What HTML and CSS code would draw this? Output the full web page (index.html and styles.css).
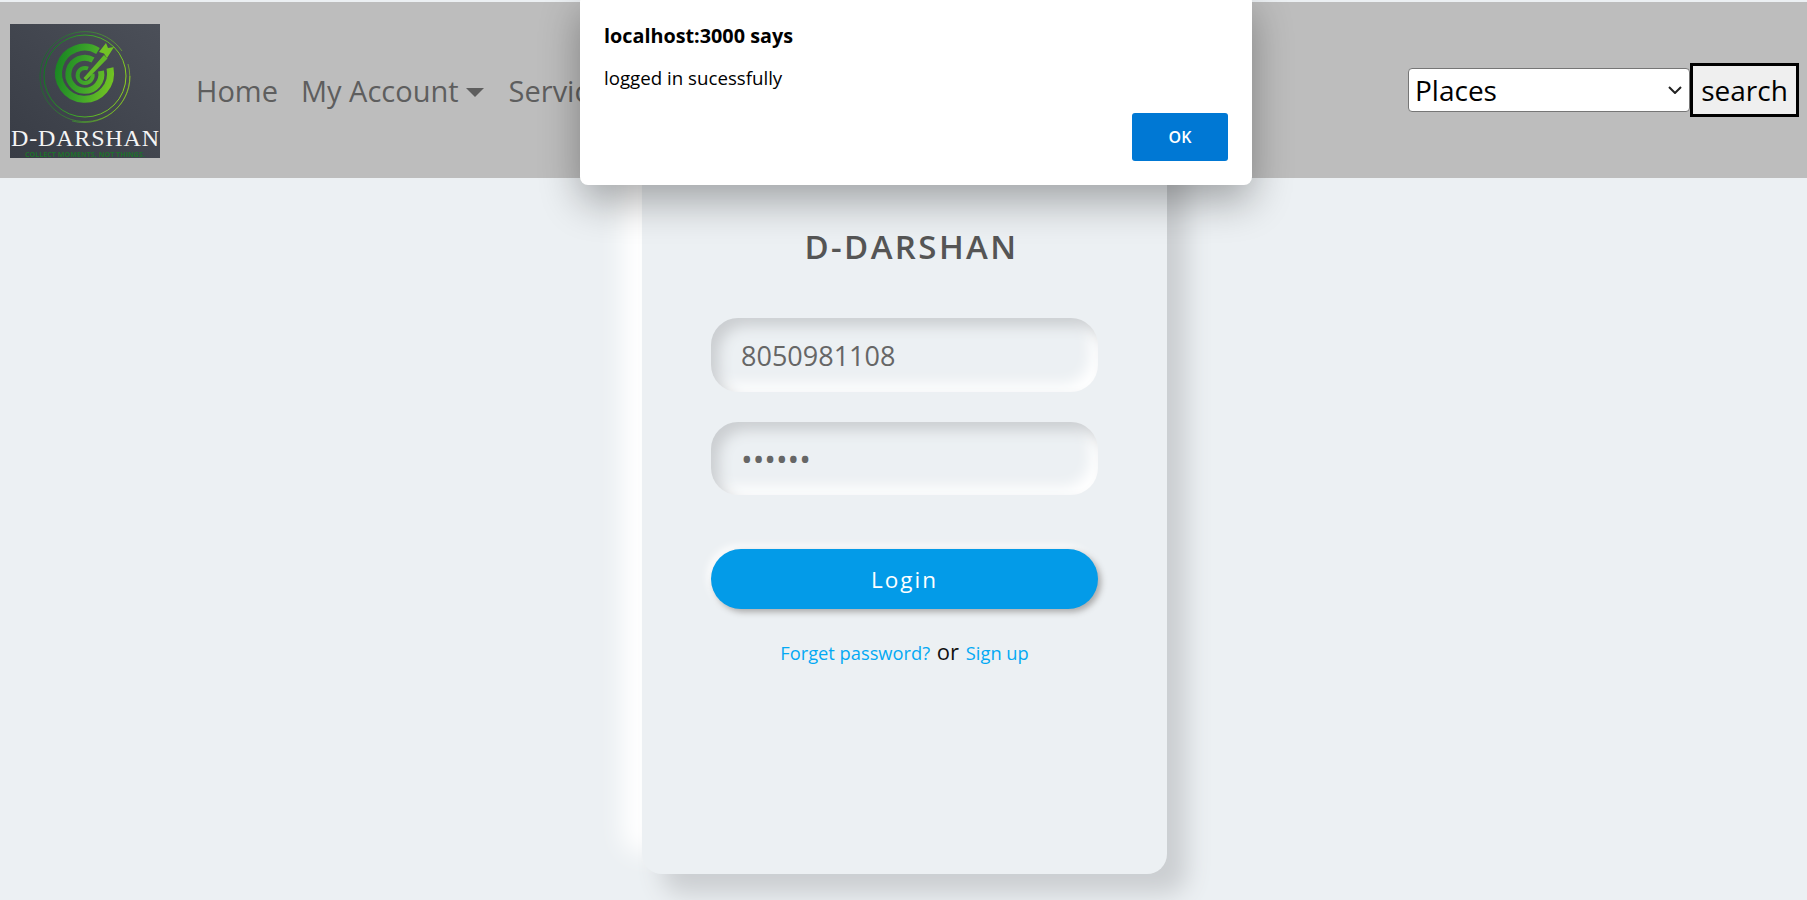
FILE: index.html
```html
<!DOCTYPE html>
<html lang="en">
<head>
<meta charset="utf-8">
<title>D-Darshan Login</title>
<link rel="stylesheet" href="styles.css">
</head>
<body>
<header class="navbar">
  <svg class="logo" viewBox="0 0 150 134" width="150" height="134" aria-label="D-Darshan logo">
    <defs>
      <linearGradient id="logoBg" x1="0" y1="1" x2="1" y2="0">
        <stop offset="0" stop-color="#383c45"/>
        <stop offset="1" stop-color="#4b4f58"/>
      </linearGradient>
      <linearGradient id="logoGreen" gradientUnits="userSpaceOnUse" x1="30" y1="40" x2="120" y2="60">
        <stop offset="0" stop-color="#07761f"/>
        <stop offset="0.5" stop-color="#3ea52a"/>
        <stop offset="1" stop-color="#93d51f"/>
      </linearGradient>
    </defs>
    <rect width="150" height="134" fill="url(#logoBg)"/>
    <g fill="none" stroke="url(#logoGreen)">
      <path d="M112 27A45 45 0 1 0 120 52" stroke-width="0.6"/>
      <path d="M118 40A46 46 0 0 1 62 97" stroke-width="0.6"/>
      <circle cx="75" cy="52" r="41" stroke-width="1"/>
      <path d="M88 27A26 26 0 1 0 100 44" stroke-width="7"/>
      <path d="M83 36A16.500 16.500 0 1 0 91 47" stroke-width="6"/>
      <path d="M78 44.500A7.500 7.500 0 1 0 82.500 50" stroke-width="4"/>
    </g>
    <path d="M73.500 54 L94 31 L97.500 34.500 L76 56.500Z" fill="#62b828"/>
    <path d="M89 28 L96 19 L98 24 L104 23 L97 34 L94 29.500Z" fill="#72c325"/>
    <text class="logo-name" x="1" y="122" textLength="148" lengthAdjust="spacing">D-DARSHAN</text>
    <text class="logo-tag" x="15" y="132.500" textLength="120" lengthAdjust="spacingAndGlyphs">COLLECT MOMENTS, NOT THINGS.</text>
  </svg>
  <nav class="menu">
    <a class="menu-link" href="#">Home</a>
    <a class="menu-link" href="#">My Account<span class="caret"></span></a>
    <a class="menu-link" href="#">Services</a>
  </nav>
  <form class="search">
    <select class="search-select"><option>Places</option></select>
    <button class="search-button" type="button">search</button>
  </form>
</header>

<main class="page">
  <section class="card">
    <h1 class="brand">D-DARSHAN</h1>
    <input class="field" type="text" value="8050981108">
    <input class="field field-pass" type="password" value="123456">
    <button class="login" type="button">Login</button>
    <p class="links"><a href="#">Forget password?</a> <span class="or">or</span> <a href="#">Sign up</a></p>
  </section>
</main>

<div class="dialog" role="alertdialog">
  <div class="dialog-title">localhost:3000 says</div>
  <div class="dialog-text">logged in sucessfully</div>
  <div class="dialog-actions"><button class="dialog-ok" type="button">OK</button></div>
</div>
</body>
</html>
```
FILE: styles.css
```css
* { box-sizing: border-box; }
html, body { height: 100%; }
body {
  margin: 0;
  padding-top: 2px;
  overflow: hidden;
  background: #ecf0f3;
  font-family: "Open Sans", "Noto Sans", sans-serif;
}
.navbar {
  position: relative;
  z-index: 2;
  display: flex;
  align-items: center;
  height: 176px;
  padding: 0 8px 0 10px;
  background: #bdbdbd;
}
.logo { flex: none; display: block; margin-top: 2px; }
.logo-name { font-family: "Liberation Serif", serif; font-size: 24px; fill: #f4f4f4; }
.logo-tag { font-family: "Open Sans", sans-serif; font-size: 7px; font-weight: 700; fill: #1f6f2c; }
.menu {
  display: flex;
  align-items: center;
  gap: 23px;
  margin-left: 36px;
  font-size: 29px;
}
.menu-link { color: #5e5e5e; text-decoration: none; white-space: nowrap; }
.caret {
  display: inline-block;
  margin: 0 2px 0 7px;
  vertical-align: 5px;
  border-top: 9px solid #5e5e5e;
  border-left: 9px solid transparent;
  border-right: 9px solid transparent;
}
.search { display: flex; align-items: center; margin-left: auto; }
.search-select {
  width: 282px;
  height: 44px;
  padding: 0 30px 0 6px;
  appearance: none;
  border: 1px solid #767676;
  border-radius: 4px;
  font: 28px "Open Sans", sans-serif;
  background: #fff url("data:image/svg+xml,%3Csvg xmlns='http://www.w3.org/2000/svg' width='14' height='8' viewBox='0 0 14 8'%3E%3Cpath d='M1 1l6 6 6-6' fill='none' stroke='%23222' stroke-width='2'/%3E%3C/svg%3E") no-repeat right 7px center;
  color: #000;
}
.search-button {
  width: 109px;
  height: 54px;
  padding: 0;
  border: 3px solid #000;
  background: #efefef;
  color: #000;
  font: 28px "Open Sans", sans-serif;
}
.page { display: flex; justify-content: center; padding-left: 2px; }
.card {
  display: flex;
  flex-direction: column;
  width: 525px;
  height: 776px;
  margin-top: -80px;
  padding: 124px 69px 0 69px;
  border-radius: 20px;
  background: #ecf0f3;
  box-shadow: 20px 20px 25px #cbced1, -20px -20px 25px #fff;
}
.brand {
  margin: 0 0 46px 0;
  height: 50px;
  line-height: 50px;
  text-align: center;
  font-size: 33px;
  font-weight: 600;
  letter-spacing: 2.4px;
  color: #555;
  transform: translateX(7px);
}
.field {
  display: block;
  width: 100%;
  height: 74px;
  padding: 0 30px;
  border: 0;
  outline: 0;
  border-radius: 27px;
  background: #ecf0f3;
  box-shadow: inset 8px 8px 14px #cbced1, inset -8px -8px 14px #fff;
  color: #666;
  font: 27px "Open Sans", sans-serif;
}
.field-pass { margin-top: 30px; height: 73px; font-size: 31px; }
.login {
  display: block;
  width: 100%;
  height: 60px;
  margin-top: 54px;
  border: 0;
  border-radius: 30px;
  background: #039be8;
  box-shadow: 3px 3px 6px #a8a8a8, -3px -3px 8px #fff;
  color: #fff;
  font: 22.5px "Open Sans", sans-serif;
  letter-spacing: 2px;
}
.links {
  margin: 27px 0 0 0;
  text-align: center;
  font-size: 18.3px;
  line-height: 30px;
}
.links a { color: #03a9f4; text-decoration: none; }
.or { font-size: 22px; color: #111; margin: 0 2px; }
.dialog {
  position: absolute;
  z-index: 3;
  top: -6px;
  left: 580px;
  width: 672px;
  height: 191px;
  padding: 30px 24px 0 24px;
  border-radius: 8px;
  background: #fff;
  box-shadow: 0 16px 40px rgba(0, 0, 0, 0.32);
  color: #000;
  font-size: 18.7px;
}
.dialog-title { font-weight: 700; line-height: 24px; font-size: 19.8px; }
.dialog-text { margin-top: 18px; line-height: 24px; }
.dialog-actions { display: flex; justify-content: flex-end; margin-top: 23px; }
.dialog-ok {
  width: 96px;
  height: 48px;
  border: 0;
  border-radius: 3px;
  background: #0078d4;
  color: #fff;
  font: 600 16px "Open Sans", sans-serif;
}
```
